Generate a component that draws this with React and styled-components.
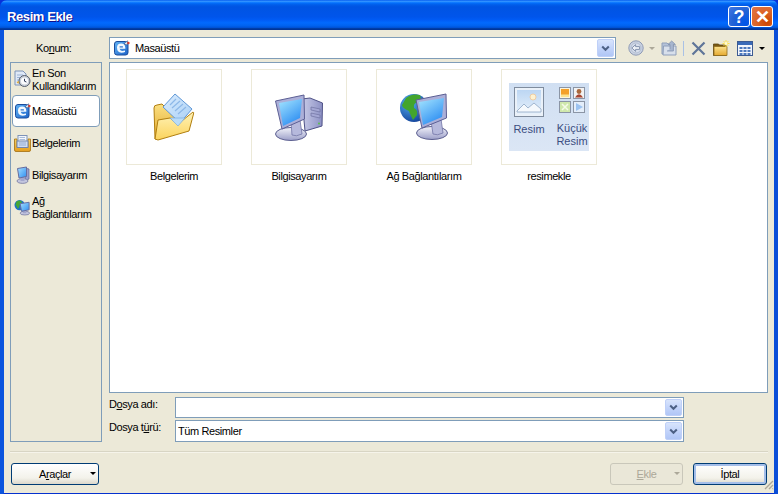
import React from 'react';
import styled, { createGlobalStyle } from 'styled-components';

const GlobalStyle = createGlobalStyle`
  html, body {
    margin: 0;
    padding: 0;
    background: #0831d9;
  }
  * { box-sizing: border-box; }
`;

const UI_FONT = `"Liberation Sans", "Noto Sans", sans-serif`;

const Window = styled.div`
  width: 778px;
  height: 494px;
  display: flex;
  flex-direction: column;
  position: relative;
  overflow: hidden;
  font-family: ${UI_FONT};
  font-size: 11px;
  letter-spacing: -0.4px;
  color: #000;
  background: #0831d9;
  border-radius: 7px 7px 0 0;
`;

const TitleBar = styled.div`
  height: 30px;
  flex: none;
  display: flex;
  align-items: center;
  padding: 3px 5px 0 7px;
  background: linear-gradient(180deg, #0058ee 0%, #3593ff 4%, #288eff 6%, #127dff 8%, #036ffc 10%, #0262ee 14%, #0057e5 20%, #0054e3 24%, #0055eb 56%, #005bf5 66%, #026afe 76%, #0062ef 86%, #0052d6 92%, #0040ab 94%, #003092 100%);
`;

const Title = styled.div`
  flex: 1;
  font-weight: 700;
  font-size: 13px;
  color: #fff;
  text-shadow: 1px 1px 0 #0f1089;
`;

const CaptionButton = styled.button`
  width: 22px;
  height: 21px;
  margin-left: 1px;
  padding: 0;
  display: flex;
  align-items: center;
  justify-content: center;
  border: 1px solid #fff;
  border-radius: 3px;
  background: ${p => p.$close
    ? 'radial-gradient(circle at 75% 80%, #cc4600 0%, #dc6527 50%, #e2754c 100%)'
    : 'radial-gradient(circle at 80% 85%, #0054e9 0%, #2263d5 55%, #4479e4 100%)'};
  color: #fff;
  font-family: ${UI_FONT};
  font-weight: 700;
  font-size: 18px;
  line-height: 1;
`;

const Client = styled.div`
  flex: 1;
  padding: 7px 6px 8px;
  display: flex;
  flex-direction: column;
  background: #ece9d8;
  border-left: 4px solid #0c55de;
  border-right: 4px solid #0a4ed8;
  border-bottom: 4px solid #0531cf;
`;

const TopRow = styled.div`
  height: 22px;
  flex: none;
  display: flex;
  align-items: center;
`;

const LocationLabel = styled.label`
  width: 99px;
  padding-left: 26px;
  flex: none;
`;

const Combo = styled.div`
  height: ${p => p.$height || 22}px;
  flex: 1;
  min-width: 0;
  display: flex;
  align-items: center;
  gap: 5px;
  padding: 1px 1px 1px ${p => p.$pad || 2}px;
  background: #fff;
  border: 1px solid #7f9db9;
`;

const ComboText = styled.span`
  flex: 1;
  white-space: nowrap;
`;

const DropButton = styled.span`
  width: 17px;
  align-self: stretch;
  flex: none;
  display: flex;
  align-items: center;
  justify-content: center;
  border: 1px solid #bfd0f8;
  border-radius: 2px;
  background: linear-gradient(180deg, #d8e4fc 0%, #c3d4fa 50%, #b0c6f6 100%);
`;

const Toolbar = styled.div`
  width: 152px;
  flex: none;
  display: flex;
  align-items: center;
  padding-left: 12px;
`;

const ToolSlot = styled.span`
  display: flex;
  align-items: center;
  justify-content: center;
  flex: none;
  width: ${p => p.$w}px;
  margin-left: ${p => p.$gap || 0}px;
`;

const ToolDivider = styled.span`
  width: 1px;
  height: 15px;
  flex: none;
  margin: 0 7px 0 6px;
  background: #a9c1e6;
`;

const ToolArrow = styled.i`
  width: 0;
  height: 0;
  border-left: 3px solid transparent;
  border-right: 3px solid transparent;
  border-top: 3px solid ${p => p.$muted ? '#aca899' : '#000'};
`;

const MainRow = styled.div`
  flex: 1;
  margin-top: 3px;
  min-height: 0;
  display: flex;
  gap: 7px;
`;

const Sidebar = styled.nav`
  width: 92px;
  flex: none;
  display: flex;
  flex-direction: column;
  background: #ece9d8;
  border: 1px solid #7f9db9;
`;

const Place = styled.div`
  height: 32px;
  margin: 0 1px;
  padding-left: 1px;
  display: flex;
  align-items: center;
  gap: 1px;
  line-height: 13px;
  white-space: nowrap;
  border: 1px solid ${p => p.$selected ? '#7f9db9' : 'transparent'};
  border-radius: 4px;
  background: ${p => p.$selected ? '#fff' : 'transparent'};
`;

const PlaceIcon = styled.span`
  width: 17px;
  flex: none;
  display: flex;
  justify-content: center;
`;

const PlaceLabel = styled.span`
  padding-top: ${p => p.$twoLines ? 2 : 0}px;
`;

const RightColumn = styled.div`
  flex: 1;
  min-width: 0;
  display: flex;
  flex-direction: column;
`;

const FileList = styled.div`
  height: 331px;
  flex: none;
  padding: 6px 16px;
  display: flex;
  gap: 29px;
  align-items: flex-start;
  background: #fff;
  border: 1px solid #7f9db9;
`;

const FileItem = styled.div`
  width: 96px;
  flex: none;
  display: flex;
  flex-direction: column;
  align-items: center;
`;

const Tile = styled.div`
  width: 96px;
  height: 96px;
  display: flex;
  align-items: center;
  justify-content: center;
  border: 1px solid #ece9d8;
`;

const FileName = styled.div`
  margin-top: 4px;
  white-space: nowrap;
  line-height: 14px;
`;

const Fields = styled.div`
  margin-top: 4px;
  width: 575px;
  display: grid;
  grid-template-columns: 66px 1fr;
  row-gap: 2px;
  align-items: start;
`;

const FieldLabel = styled.label`
  line-height: 14px;
`;

const Thumb = styled.div`
  width: 80px;
  height: 68px;
  display: flex;
  padding: 4px 0 0 5px;
  color: #3b4d7f;
  letter-spacing: 0;
  background: linear-gradient(180deg, #d0dff2 0%, #dbe6f5 100%);
`;

const ThumbCol = styled.div`
  width: ${p => p.$w}px;
  flex: none;
  margin-left: ${p => p.$ml || 0}px;
  display: flex;
  flex-direction: column;
  align-items: center;
  text-align: center;
  line-height: 13px;
`;

const ThumbLabel = styled.div`
  margin-top: ${p => p.$mt}px;
`;

const Separator = styled.div`
  height: 2px;
  flex: none;
  margin-top: 9px;
  background: #d8d5c4;
  border-bottom: 1px solid #f6f4ea;
`;

const Footer = styled.div`
  flex: none;
  margin-top: 10px;
  height: 22px;
  display: flex;
  align-items: center;
  padding: 0 1px;
`;

const Button = styled.button`
  width: ${p => p.$w}px;
  height: 22px;
  margin-left: ${p => p.$ml || 0}px;
  flex: none;
  position: relative;
  padding: 0;
  font: inherit;
  letter-spacing: inherit;
  color: ${p => p.$disabled ? '#aca899' : '#000'};
  border: 1px solid ${p => p.$disabled ? '#c9c7ba' : '#003c74'};
  border-radius: 3px;
  background: ${p => p.$disabled ? '#eae7d8' : 'linear-gradient(180deg, #fff 0%, #f3f2ea 70%, #dcd8cc 100%)'};
  box-shadow: ${p => p.$default ? 'inset 0 0 0 2px #a4bee9' : 'none'};
`;

const ButtonArrow = styled.span`
  position: absolute;
  right: 2px;
  top: 8px;
  width: 0;
  height: 0;
  border-left: 3px solid transparent;
  border-right: 3px solid transparent;
  border-top: 3px solid ${p => p.$disabled ? '#aca899' : '#000'};
`;

const Grip = styled.svg`
  position: absolute;
  right: 4px;
  bottom: 4px;
`;

const Chevron = () => (
  <svg width="9" height="7" viewBox="0 0 9 7">
    <path d="M1.2 1.5 L4.5 4.8 L7.8 1.5" fill="none" stroke="#4d6185" strokeWidth="2" />
  </svg>
);

const DesktopIcon = () => (
  <svg width="16" height="16" viewBox="0 0 16 16">
    <defs>
      <linearGradient id="deskBlue" x1="0" y1="0" x2="1" y2="1">
        <stop offset="0" stopColor="#62b4f5" />
        <stop offset="1" stopColor="#1c62c8" />
      </linearGradient>
    </defs>
    <rect x=".5" y="1.5" width="13.5" height="13.5" rx="2.5" fill="url(#deskBlue)" stroke="#1b4c9c" />
    <path d="M3 7.5 Q3 3.8 7.2 3.6 Q11 3.6 11.3 7.5 L11.3 8.8 H5.6 Q6 11 8.2 10.9 L11 10.4 V12 Q9.5 12.8 7.4 12.8 Q3 12.4 3 7.5 Z" fill="#f3f9ff" />
    <path d="M5.6 6.9 H8.9" stroke="#2e75d0" strokeWidth="1.2" />
    <path d="M10 4 L13.6 .8 L13.2 5 Z" fill="#f7f7f7" stroke="#34507f" strokeWidth=".6" />
    <circle cx="14.4" cy="3" r="1.2" fill="#e23c2c" />
  </svg>
);

const RecentIcon = () => (
  <svg width="17" height="18" viewBox="0 0 17 18">
    <path d="M1 1 H9 L12 4 V15 H1 Z" fill="#dfe9f7" stroke="#7d93b8" />
    <path d="M3 5 H9 M3 7.5 H7 M3 10 H5" stroke="#9bb3d6" />
    <circle cx="10.5" cy="11" r="5.5" fill="#c8cfd8" stroke="#59606e" />
    <circle cx="10.5" cy="11" r="3.6" fill="#fbfcfe" />
    <path d="M10.5 8.8 V11.2 L12.4 12" fill="none" stroke="#2d3a56" />
    <path d="M2.5 12 L5 11 L4.4 14 Z" fill="#e0a526" />
  </svg>
);

const DocsSmallIcon = () => (
  <svg width="17" height="17" viewBox="0 0 17 17">
    <defs>
      <linearGradient id="docsGold" x1="0" y1="0" x2="0" y2="1">
        <stop offset="0" stopColor="#f6cf63" />
        <stop offset="1" stopColor="#e49e1e" />
      </linearGradient>
    </defs>
    <path d="M.5 4 H3 V12 H14 V4 H16.5 V15 Q16.5 16.5 15 16.5 H2 Q.5 16.5 .5 15 Z" fill="url(#docsGold)" stroke="#a26f10" strokeWidth=".8" />
    <rect x="4" y=".5" width="9" height="6" fill="#f4f7fc" stroke="#7d93b8" />
    <rect x="3" y="6" width="11" height="6.5" fill="#cfdcf2" stroke="#7386ac" />
    <path d="M5 8 H12 M5 10 H12" stroke="#96add2" />
    <path d="M5.5 2.5 H11 M5.5 4.5 H11" stroke="#a8bcdc" />
  </svg>
);

const PcSmallIcon = () => (
  <svg width="16" height="18" viewBox="0 0 16 18">
    <defs>
      <linearGradient id="pcSmallScreen" x1="0" y1="0" x2="1" y2="1">
        <stop offset="0" stopColor="#a7e0ff" />
        <stop offset="1" stopColor="#2f8ef0" />
      </linearGradient>
    </defs>
    <path d="M10 2 L14 3 V13 L10 15 Z" fill="#9a9ec9" stroke="#5e628f" strokeWidth=".7" />
    <ellipse cx="7.5" cy="15" rx="5.5" ry="2.4" fill="#c3c6de" stroke="#6a6e98" strokeWidth=".7" />
    <path d="M5.5 11 H9.5 V15 H5.5 Z" fill="#a3a7cd" />
    <path d="M2.5 2.5 L11.5 1 V10.5 L4 12 Z" fill="url(#pcSmallScreen)" stroke="#666c9f" />
  </svg>
);

const NetSmallIcon = () => (
  <svg width="18" height="18" viewBox="0 0 18 18">
    <defs>
      <linearGradient id="netSmallScreen" x1="0" y1="0" x2="1" y2="1">
        <stop offset="0" stopColor="#a7e0ff" />
        <stop offset="1" stopColor="#2f8ef0" />
      </linearGradient>
    </defs>
    <circle cx="6" cy="7" r="5.5" fill="#1c6fc9" />
    <path d="M2.5 3.5 Q5.5 1 8 3 Q9 5 6 6.5 Q6 9.5 4 11 Q3 8 1.5 7 Z" fill="#45a736" />
    <ellipse cx="11.5" cy="15.5" rx="5" ry="2" fill="#c3c6de" stroke="#6a6e98" strokeWidth=".7" />
    <path d="M9.5 12 H13 V15.5 H9.5 Z" fill="#a3a7cd" />
    <path d="M6.5 5.5 L16 4 V12 L8 13.5 Z" fill="url(#netSmallScreen)" stroke="#666c9f" />
  </svg>
);

const BackIcon = () => (
  <svg width="16" height="16" viewBox="0 0 16 16">
    <circle cx="8" cy="8" r="7.2" fill="#c9d2e2" stroke="#8f9bb5" />
    <circle cx="8" cy="8" r="5" fill="#d8dfec" stroke="#b4bfd3" />
    <path d="M3.8 8 L7.6 4.6 V6.6 H11.6 V9.4 H7.6 V11.4 Z" fill="#edf1f7" stroke="#8593ae" />
  </svg>
);

const UpFolderIcon = () => (
  <svg width="16" height="16" viewBox="0 0 16 16">
    <path d="M1 3 H6 L7 4 H12 V14 H1 Z" fill="#b4c2d9" stroke="#8f9fba" />
    <path d="M2.5 6 H15 V15 H2 Z" fill="#d7dfeb" stroke="#8f9fba" />
    <path d="M9 9 V4.5 H7 L10.7 1 L14.4 4.5 H12.4 V11 H6" fill="#a7b6cf" stroke="#8393af" strokeWidth=".8" />
  </svg>
);

const DeleteIcon = () => (
  <svg width="15" height="15" viewBox="0 0 15 15">
    <path d="M1.5 1.5 L13.5 13.5 M13.5 1.5 L1.5 13.5" stroke="#5f7599" strokeWidth="2.2" />
  </svg>
);

const NewFolderIcon = () => (
  <svg width="17" height="16" viewBox="0 0 17 16">
    <defs>
      <linearGradient id="newFolder" x1="0" y1="0" x2="0" y2="1">
        <stop offset="0" stopColor="#fbe28c" />
        <stop offset="1" stopColor="#e5a92f" />
      </linearGradient>
    </defs>
    <path d="M.5 4 H5.5 L6.5 5 H13 V15.5 H.5 Z" fill="#7a5a14" stroke="#5c4410" strokeWidth=".8" />
    <path d="M1 6.5 H14 V15.5 H1 Z" fill="url(#newFolder)" stroke="#8f6b1a" strokeWidth=".8" />
    <path d="M13 0 V7 M9.5 3.5 H16.5 M10.6 1.1 L15.4 5.9 M15.4 1.1 L10.6 5.9" stroke="#ffe14d" />
    <circle cx="13" cy="3.5" r="1.4" fill="#fffbd0" />
  </svg>
);

const ViewsIcon = () => (
  <svg width="16" height="15" viewBox="0 0 16 15">
    <rect x=".5" y=".5" width="15" height="14" fill="#f3f6fb" stroke="#3c5b92" />
    <rect x="1" y="1" width="14" height="3" fill="#3a6bb8" />
    {[6, 9, 12].map(y => [2.5, 6.5, 10.5].map(x => (
      <rect key={`${x}-${y}`} x={x} y={y} width="3" height="2" fill="#4d79bd" />
    )))}
  </svg>
);

const DocsLargeIcon = () => (
  <svg width="42" height="48" viewBox="0 0 42 48">
    <defs>
      <linearGradient id="folderFront" x1="0" y1="0" x2="0" y2="1">
        <stop offset="0" stopColor="#fff3b8" />
        <stop offset="1" stopColor="#fbd35c" />
      </linearGradient>
      <linearGradient id="folderBack" x1="0" y1="0" x2="0" y2="1">
        <stop offset="0" stopColor="#fbe082" />
        <stop offset="1" stopColor="#e3a92c" />
      </linearGradient>
      <linearGradient id="sheet" x1="0" y1="0" x2="1" y2="1">
        <stop offset="0" stopColor="#d9ebfd" />
        <stop offset="1" stopColor="#a9d0f6" />
      </linearGradient>
    </defs>
    <path d="M1 15 Q1 12 4 12 L9 11 L22 24 L22 40 L2 46 Z" fill="url(#folderBack)" stroke="#b17f10" />
    <path d="M10 14 L22 1 L39 16 L27 30 Z" fill="url(#sheet)" stroke="#5f97d6" />
    <path d="M17 12 L23 6 M19 15 L27 8 M22 18 L30 11 M25 21 L33 14" stroke="#8db8e8" strokeWidth="1.2" />
    <path d="M2 46 L5 27 L17 25 L25 31 L40 19 Q41 19 40.5 21 L36 38 L5 47 Z" fill="url(#folderFront)" stroke="#b17f10" />
    <path d="M17 25 L32 25 L25 33 Z" fill="#b9dcf8" stroke="#6fa5dc" strokeWidth=".6" />
  </svg>
);

const PcLargeIcon = () => (
  <svg width="48" height="47" viewBox="0 0 48 47">
    <defs>
      <linearGradient id="pcScreen" x1="0" y1="0" x2=".6" y2="1">
        <stop offset="0" stopColor="#a6e6ff" />
        <stop offset="1" stopColor="#2f8ff2" />
      </linearGradient>
      <linearGradient id="pcCase" x1="0" y1="0" x2="1" y2="0">
        <stop offset="0" stopColor="#c9cce8" />
        <stop offset="1" stopColor="#8c90c4" />
      </linearGradient>
      <linearGradient id="pcBase" x1="0" y1="0" x2="0" y2="1">
        <stop offset="0" stopColor="#f2f3fa" />
        <stop offset="1" stopColor="#9b9ec8" />
      </linearGradient>
    </defs>
    <path d="M27 5 L35 4 L47.5 9 L47 32 L30 37 Z" fill="url(#pcCase)" stroke="#4f5287" />
    <path d="M36 13 L45 15 V18 L36 16 Z M36 19 L45 21 V24 L36 22 Z" fill="#a4a7d4" stroke="#666a99" strokeWidth=".6" />
    <circle cx="44" cy="29.5" r="1" fill="#58c24b" />
    <ellipse cx="16" cy="40" rx="15.5" ry="6.5" fill="url(#pcBase)" stroke="#5c5f90" />
    <path d="M16 28 L25 26 L27 40 Q21 43 17 41 Z" fill="#b6b9dc" stroke="#7275a6" strokeWidth=".8" />
    <path d="M.5 7 L29 1 L29.5 25 L7 35 Z" fill="#abafd8" stroke="#5c5f94" />
    <path d="M4 9 L27 5 L25 24 L8 32 Z" fill="url(#pcScreen)" />
  </svg>
);

const NetLargeIcon = () => (
  <svg width="48" height="49" viewBox="0 0 48 49">
    <defs>
      <radialGradient id="globe" cx=".35" cy=".3" r=".85">
        <stop offset="0" stopColor="#55b2f2" />
        <stop offset="1" stopColor="#0a348f" />
      </radialGradient>
      <linearGradient id="netScreen" x1="0" y1="0" x2=".6" y2="1">
        <stop offset="0" stopColor="#a6e6ff" />
        <stop offset="1" stopColor="#2f8ff2" />
      </linearGradient>
      <linearGradient id="netBase" x1="0" y1="0" x2="0" y2="1">
        <stop offset="0" stopColor="#f2f3fa" />
        <stop offset="1" stopColor="#9b9ec8" />
      </linearGradient>
    </defs>
    <circle cx="14" cy="15" r="14" fill="url(#globe)" />
    <path d="M6 5 Q12 0 20 2 Q22 6 18 9 Q13 10 14 15 Q18 17 17 22 L13 27 Q10 21 9 18 Q2 15 2 12 Z" fill="#43a52d" />
    <ellipse cx="32" cy="40" rx="15.5" ry="6.5" fill="url(#netBase)" stroke="#5c5f90" />
    <path d="M31 28 L41 26 L43 40 Q37 43 33 41 Z" fill="#b6b9dc" stroke="#7275a6" strokeWidth=".8" />
    <path d="M16 7 L46 1 L46.5 25 L22 35 Z" fill="#abafd8" stroke="#5c5f94" />
    <path d="M19 9 L44 5 L42 24 L23 32 Z" fill="url(#netScreen)" />
  </svg>
);

const BigPictureIcon = () => (
  <svg width="30" height="30" viewBox="0 0 30 30">
    <defs>
      <linearGradient id="photoSky" x1="0" y1="0" x2="0" y2="1">
        <stop offset="0" stopColor="#bcd6f3" />
        <stop offset="1" stopColor="#e7f1fb" />
      </linearGradient>
    </defs>
    <rect x=".5" y=".5" width="29" height="29" fill="#eaf1f9" stroke="#7f8c9e" />
    <rect x="3" y="3" width="24" height="24" fill="url(#photoSky)" />
    <circle cx="19" cy="10" r="3" fill="#fdf2d2" stroke="#efc28e" strokeWidth=".7" />
    <path d="M3 24 L10 17 L14 21 L20 16 L27 22 V25 H3 Z" fill="#f5f9fd" stroke="#8da6c4" strokeWidth=".8" />
  </svg>
);

const SmallPicturesIcon = () => (
  <svg width="26" height="26" viewBox="0 0 26 26">
    <rect x=".5" y=".5" width="11" height="11" fill="#fbf4dc" stroke="#8b95a5" />
    <rect x="2" y="2" width="8" height="8" fill="#f4a02a" />
    <path d="M2 7.5 H10 V10 H2 Z" fill="#fde28d" />
    <rect x="14.5" y=".5" width="11" height="11" fill="#f2f2f2" stroke="#8b95a5" />
    <circle cx="20" cy="4.5" r="2.4" fill="#a9683c" />
    <path d="M16 10.5 Q20 4 24 10.5 Z" fill="#a8452f" />
    <rect x=".5" y="14.5" width="11" height="11" fill="#cfe8ac" stroke="#8b95a5" />
    <path d="M3 17 L9 23 M9 17 L3 23" stroke="#f5fbe8" strokeWidth="1.5" />
    <rect x="14.5" y="14.5" width="11" height="11" fill="#e4eefa" stroke="#8b95a5" />
    <path d="M17 16 L24 20 L17 24 Z" fill="#9cc3f0" />
  </svg>
);

const places = [
  { label: <>En Son<br />Kullandıklarım</>, icon: <RecentIcon />, twoLines: true },
  { label: 'Masaüstü', icon: <DesktopIcon />, selected: true },
  { label: 'Belgelerim', icon: <DocsSmallIcon /> },
  { label: 'Bilgisayarım', icon: <PcSmallIcon /> },
  { label: <>Ağ<br />Bağlantılarım</>, icon: <NetSmallIcon />, twoLines: true },
];

const files = [
  { name: 'Belgelerim', preview: <DocsLargeIcon /> },
  { name: 'Bilgisayarım', preview: <PcLargeIcon /> },
  { name: 'Ağ Bağlantılarım', preview: <NetLargeIcon /> },
  {
    name: 'resimekle',
    preview: (
      <Thumb>
        <ThumbCol $w={30}>
          <BigPictureIcon />
          <ThumbLabel $mt={6}>Resim</ThumbLabel>
        </ThumbCol>
        <ThumbCol $w={32} $ml={12}>
          <SmallPicturesIcon />
          <ThumbLabel $mt={9}>Küçük<br />Resim</ThumbLabel>
        </ThumbCol>
      </Thumb>
    ),
  },
];

const App = () => (
  <Window>
    <GlobalStyle />
    <TitleBar>
      <Title>Resim Ekle</Title>
      <CaptionButton>?</CaptionButton>
      <CaptionButton $close>✕</CaptionButton>
    </TitleBar>
    <Client>
      <TopRow>
        <LocationLabel>Ko<u>n</u>um:</LocationLabel>
        <Combo $pad={4}>
          <DesktopIcon />
          <ComboText>Masaüstü</ComboText>
          <DropButton><Chevron /></DropButton>
        </Combo>
        <Toolbar>
          <ToolSlot $w={16}><BackIcon /></ToolSlot>
          <ToolSlot $w={6} $gap={5}><ToolArrow $muted /></ToolSlot>
          <ToolSlot $w={16} $gap={6}><UpFolderIcon /></ToolSlot>
          <ToolDivider />
          <ToolSlot $w={15}><DeleteIcon /></ToolSlot>
          <ToolSlot $w={17} $gap={7}><NewFolderIcon /></ToolSlot>
          <ToolSlot $w={16} $gap={7}><ViewsIcon /></ToolSlot>
          <ToolSlot $w={6} $gap={6}><ToolArrow /></ToolSlot>
        </Toolbar>
      </TopRow>
      <MainRow>
        <Sidebar>
          {places.map((place, i) => (
            <Place key={i} $selected={place.selected}>
              <PlaceIcon>{place.icon}</PlaceIcon>
              <PlaceLabel $twoLines={place.twoLines}>{place.label}</PlaceLabel>
            </Place>
          ))}
        </Sidebar>
        <RightColumn>
          <FileList>
            {files.map(file => (
              <FileItem key={file.name}>
                <Tile>{file.preview}</Tile>
                <FileName>{file.name}</FileName>
              </FileItem>
            ))}
          </FileList>
          <Fields>
            <FieldLabel>D<u>o</u>sya adı:</FieldLabel>
            <Combo $height={21}>
              <ComboText />
              <DropButton><Chevron /></DropButton>
            </Combo>
            <FieldLabel>Dosya t<u>ü</u>rü:</FieldLabel>
            <Combo $height={22}>
              <ComboText>Tüm Resimler</ComboText>
              <DropButton><Chevron /></DropButton>
            </Combo>
          </Fields>
        </RightColumn>
      </MainRow>
      <Separator />
      <Footer>
        <Button $w={88}>A<u>r</u>açlar<ButtonArrow /></Button>
        <Button $w={73} $ml={511} $disabled><u>E</u>kle<ButtonArrow $disabled /></Button>
        <Button $w={74} $ml={10} $default>İptal</Button>
      </Footer>
    </Client>
    <Grip width="12" height="12" viewBox="0 0 12 12">
      <path d="M11 3 L3 11 M11 7 L7 11 M11 10.5 L10.5 11" stroke="#aca899" strokeWidth="1.4" />
    </Grip>
  </Window>
);

export default App;
